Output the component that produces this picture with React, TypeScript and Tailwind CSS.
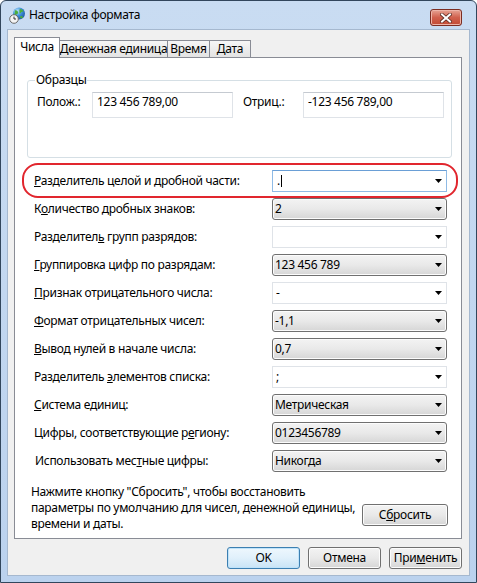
import type { ReactNode } from "react";

type Row = {
  label: ReactNode;
  value: string;
  editable?: boolean;
  focused?: boolean;
  indent?: boolean;
};

const rows: Row[] = [
  { label: <><u>Р</u>азделитель целой и дробной части:</>, value: ".", editable: true, focused: true },
  { label: <>К<u>о</u>личество дробных знаков:</>, value: "2" },
  { label: <>Разделител<u>ь</u> групп разрядов:</>, value: "", editable: true },
  { label: <><u>Г</u>руппировка цифр по разрядам:</>, value: "123 456 789" },
  { label: <><u>П</u>ризнак отрицательного числа:</>, value: "-", editable: true },
  { label: <><u>Ф</u>ормат отрицательных чисел:</>, value: "-1,1" },
  { label: <><u>В</u>ывод нулей в начале числа:</>, value: "0,7" },
  { label: <>Разделитель <u>э</u>лементов списка:</>, value: ";", editable: true },
  { label: <><u>С</u>истема единиц:</>, value: "Метрическая" },
  { label: <>Цифры, соответствующие р<u>е</u>гиону:</>, value: "0123456789" },
  { label: <>Использовать мес<u>т</u>ные цифры:</>, value: "Никогда", indent: true },
];

function Arrow() {
  return (
    <svg width="7" height="4" viewBox="0 0 7 4" className="shrink-0">
      <path d="M0 0h7L3.5 4z" fill="#000" />
    </svg>
  );
}

function Combo({ row }: { row: Row }) {
  if (row.editable) {
    return (
      <div
        className={
          row.focused
            ? "flex items-center w-[175px] h-[22px] pl-[4px] pr-[4px] bg-white border border-[#8fbbe6] border-t-[#6a9fd6]"
            : "flex items-center w-[175px] h-[22px] pl-[3px] pr-[4px] bg-white border border-[#dfe3e8]"
        }
      >
        <span className="flex-1 flex items-center">
          {row.value}
          {row.focused && <span className="inline-block w-px h-[12px] bg-black ml-[1px]" />}
        </span>
        <Arrow />
      </div>
    );
  }
  return (
    <div className="flex items-center w-[175px] h-[22px] pl-[2px] pr-[4px] rounded-[3px] border border-[#707070] bg-linear-to-b from-[#f3f3f3] via-[#e9e9e9] to-[#d6d6d6] shadow-[inset_0_0_0_1px_#fcfcfc]">
      <span className="flex-1">{row.value}</span>
      <Arrow />
    </div>
  );
}

function Button({ children, def }: { children: ReactNode; def?: boolean }) {
  return (
    <div
      className={
        def
          ? "flex items-center justify-center h-[22px] w-[73px] rounded-[3px] border border-[#3c7fb1] bg-linear-to-b from-[#eef7fd] via-[#e0f0fb] to-[#c9e4f6] shadow-[inset_0_0_0_1px_#bfe3fa]"
          : "flex items-center justify-center h-[22px] w-[73px] rounded-[3px] border border-[#707070] bg-linear-to-b from-[#f3f3f3] via-[#e9e9e9] to-[#d6d6d6] shadow-[inset_0_0_0_1px_#fcfcfc]"
      }
    >
      {children}
    </div>
  );
}

function TitleIcon() {
  return (
    <svg width="17" height="17" viewBox="0 0 17 17">
      <defs>
        <radialGradient id="g" cx="0.35" cy="0.3" r="0.8">
          <stop offset="0" stopColor="#bfe6ff" />
          <stop offset="0.5" stopColor="#3a8fd8" />
          <stop offset="1" stopColor="#1c4f9c" />
        </radialGradient>
      </defs>
      <circle cx="10" cy="6.5" r="6" fill="url(#g)" />
      <path d="M6 3.5c1.5-.5 2.5.5 3 1.5s-.5 2-1.5 2.5S6 9 5.5 8z" fill="#4cae3c" />
      <path d="M11 2c1.5 0 3 1 3.5 2.5-1 .5-2 0-2.5 1s-1.5 1.5-1.5 0S10 3 11 2z" fill="#4cae3c" />
      <path d="M12 9c1 0 2 .5 2 1.5-1 1-2 1-2.5.5s-.5-2 .5-2z" fill="#4cae3c" />
      <circle cx="5" cy="12" r="4.3" fill="#f4f4f4" stroke="#6a6a6a" strokeWidth="1" />
      <path d="M5 9.6V12h2" stroke="#333" strokeWidth="1" fill="none" />
    </svg>
  );
}

function CloseButton() {
  return (
    <div className="flex items-center justify-center w-[32px] h-[17px] mt-[8px] mr-[8px] self-start rounded-[3px] border border-[#7b2d22] bg-linear-to-b from-[#e6a394] via-[#d0604d] to-[#c24a33] shadow-[inset_0_0_0_1px_#eeb4a8]">
      <svg width="12" height="10" viewBox="0 0 12 10">
        <path d="M2 1.5l8 7M10 1.5l-8 7" stroke="#5a2a22" strokeWidth="3.6" strokeLinecap="square" />
        <path d="M2 1.5l8 7M10 1.5l-8 7" stroke="#fff" strokeWidth="2" strokeLinecap="square" />
      </svg>
    </div>
  );
}

export default function App() {
  return (
    <div className="w-[477px] h-[583px] flex flex-col rounded-t-[6px] border border-[#32465c] bg-linear-to-b from-[#c9dcf2] to-[#bbd2ee] px-[6px] pb-[6px] text-[12px] tracking-[-0.3px] whitespace-nowrap text-black font-['Segoe_UI','Noto_Sans',sans-serif] leading-[16px]">
      <div className="h-[28px] flex items-center shrink-0">
        <div className="ml-[2px] mr-[3px]">
          <TitleIcon />
        </div>
        <span className="flex-1">Настройка формата</span>
        <CloseButton />
      </div>
      <div className="flex-1 flex flex-col border border-[#a5b8cf] bg-[#f0f0f0] pt-[7px]">
        <div className="flex items-end h-[20px] pl-[6px]">
          <div className="relative z-10 flex items-center justify-center w-[46px] h-[21px] -mb-px border border-b-0 border-[#898c95] bg-white pb-[3px]">
            Числа
          </div>
          <div className="flex items-center justify-center w-[108px] h-[17px] border-t border-r border-[#898c95] bg-linear-to-b from-[#f6f6f6] to-[#e3e3e3]">
            Денежная единица
          </div>
          <div className="flex items-center justify-center w-[42px] h-[17px] border-t border-r border-[#898c95] bg-linear-to-b from-[#f6f6f6] to-[#e3e3e3]">
            Время
          </div>
          <div className="flex items-center justify-center w-[41px] h-[17px] border-t border-r border-[#898c95] bg-linear-to-b from-[#f6f6f6] to-[#e3e3e3]">
            Дата
          </div>
        </div>
        <div className="relative ml-[6px] w-[448px] h-[482px] border border-[#898c95] bg-white flex flex-col">
          <div className="relative mt-[22px] ml-[12px] w-[425px] h-[78px] border border-[#d5dfe5] rounded-[3px] pt-[11px] pl-[9px]">
            <span className="absolute -top-[9px] left-[7px] bg-white px-px">Образцы</span>
            <div className="flex items-start">
              <span className="w-[55px] pt-[2px]">Полож.:</span>
              <div className="w-[141px] h-[26px] border border-[#dfe3e8] border-t-[#c5cad1] pl-[4px] pt-px">
                123 456 789,00
              </div>
              <span className="w-[60px] ml-[10px] pt-[2px]">Отриц.:</span>
              <div className="w-[141px] h-[26px] border border-[#dfe3e8] border-t-[#c5cad1] pl-[4px] pt-px">
                -123 456 789,00
              </div>
            </div>
          </div>
          <div className="mt-[12px] flex flex-col gap-[6px] pl-[19px]">
            {rows.map((r, i) => (
              <div key={i} className="flex items-center h-[22px]">
                <span className={r.indent ? "w-[238px] pl-px" : "w-[238px]"}>{r.label}</span>
                <Combo row={r} />
              </div>
            ))}
          </div>
          <div className="mt-[12px] flex items-start pl-[16px]">
            <p className="w-[331px] leading-[16px]">
              Нажмите кнопку "Сбросить", чтобы восстановить
              <br />
              параметры по умолчанию для чисел, денежной единицы,
              <br />
              времени и даты.
            </p>
            <div className="mt-[20px] flex items-center justify-center w-[86px] h-[22px] rounded-[3px] border border-[#707070] bg-linear-to-b from-[#f3f3f3] via-[#e9e9e9] to-[#d6d6d6] shadow-[inset_0_0_0_1px_#fcfcfc]">
              С<u>б</u>росить
            </div>
          </div>
          <div className="absolute left-[7px] top-[105px] w-[436px] h-[35px] rounded-[16px] border-2 border-[#e1262e]" />
        </div>
        <div className="mt-[8px] flex justify-end gap-[8px] pr-[7px]">
          <Button def>OK</Button>
          <Button>Отмена</Button>
          <Button>
            При<u>м</u>енить
          </Button>
        </div>
      </div>
    </div>
  );
}
